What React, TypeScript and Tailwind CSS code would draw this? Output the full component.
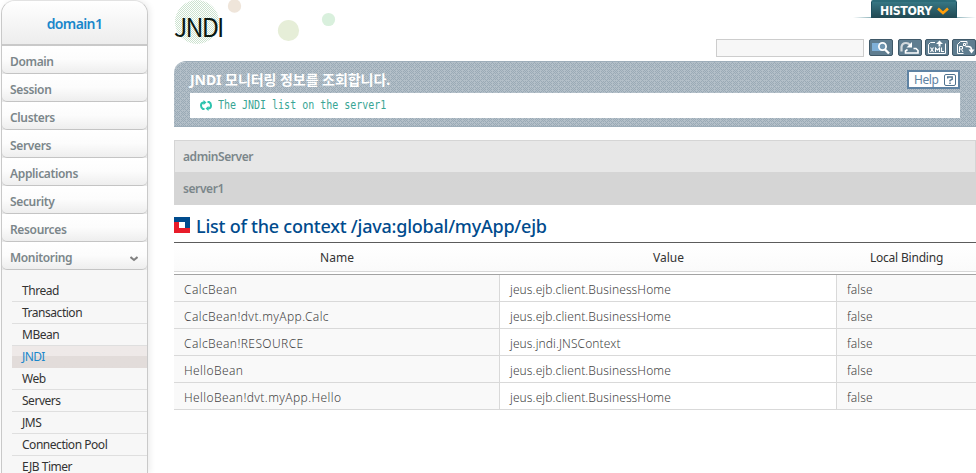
import React from "react";

const menu = ["Domain", "Session", "Clusters", "Servers", "Applications", "Security", "Resources", "Monitoring"];
const submenu = ["Thread", "Transaction", "MBean", "JNDI", "Web", "Servers", "JMS", "Connection Pool", "EJB Timer"];
const rows = [
  ["CalcBean", "jeus.ejb.client.BusinessHome", "false"],
  ["CalcBean!dvt.myApp.Calc", "jeus.ejb.client.BusinessHome", "false"],
  ["CalcBean!RESOURCE", "jeus.jndi.JNSContext", "false"],
  ["HelloBean", "jeus.ejb.client.BusinessHome", "false"],
  ["HelloBean!dvt.myApp.Hello", "jeus.ejb.client.BusinessHome", "false"],
];

function Sidebar() {
  return (
    <aside className="ml-px h-[473px] w-[147px] shrink-0 overflow-hidden rounded-t-[14px] border border-b-0 border-[#c9c9c9] border-t-[#e2e2e2] bg-[#f7f7f7] shadow-[2px_0_6px_rgba(0,0,0,0.08)]">
      <div className="flex h-[45px] items-center justify-center border-b-2 border-[#c9c9c9] bg-linear-to-b from-white to-[#ededed] pt-px text-[14px] font-semibold tracking-[-0.6px] text-[#1a87cb]">
        domain1
      </div>
      <nav className="bg-[#e9e9e9]">
        {menu.map((m) => (
          <div
            key={m}
            className="flex h-[28px] items-center justify-between rounded-b-[5px] border-b border-[#c4c4c4] bg-linear-to-b from-white via-[#fcfcfc] to-[#eeeeee] pt-[5px] pr-[9px] pl-[8px] text-[12px] leading-[18px] font-semibold tracking-[-0.35px] text-[#7b868a]"
          >
            {m}
            {m === "Monitoring" && (
              <svg width="8" height="6" viewBox="0 0 8 6" className="mt-px">
                <path d="M0.5 1 L4 4 L7.5 1" fill="none" stroke="#808080" strokeWidth="2" />
              </svg>
            )}
          </div>
        ))}
      </nav>
      <ul className="pt-[10px] pl-[10px]">
        {submenu.map((m) => (
          <li
            key={m}
            className={
              m === "JNDI"
                ? "flex h-[22px] items-center border-b border-[#e2dcda] bg-linear-to-b from-[#eee9e8] from-50% to-[#e2dcda] to-50% pt-px pl-[10px] text-[12px] leading-[16px] tracking-[-0.6px] text-[#1a87cb]"
                : "flex h-[22px] items-center border-b border-[#dfdfdf] pt-px pl-[10px] text-[12px] leading-[14px] tracking-[-0.47px] text-[#333]"
            }
          >
            {m}
          </li>
        ))}
      </ul>
    </aside>
  );
}

function TitleDots() {
  return (
    <svg width="180" height="46" className="absolute top-0 left-0">
      <defs>
        <pattern id="dots" width="2" height="2" patternUnits="userSpaceOnUse">
          <path d="M0 0h1v1H0zM1 1h1v1H1z" fill="#cbe2ce" shapeRendering="crispEdges" />
        </pattern>
      </defs>
      <circle cx="23" cy="22" r="22" fill="url(#dots)" />
      <circle cx="60.5" cy="6" r="6.7" fill="#efe5da" />
      <circle cx="114.5" cy="30.5" r="10.6" fill="#e6eed8" />
      <circle cx="154.5" cy="19.5" r="6.6" fill="#d9f0dd" />
    </svg>
  );
}

function ToolButton({ children }: { children: React.ReactNode }) {
  return (
    <button className="h-[17px] w-[24px] shrink-0 rounded-[2px] border border-[#3f5868] bg-[#5f7d90]">
      <svg width="22" height="15" viewBox="0 0 22 15" className="block">
        {children}
      </svg>
    </button>
  );
}

function Toolbar() {
  return (
    <div className="flex h-[18px] items-start">
      <input className="h-[18px] w-[148px] border border-[#cdcdcd] bg-[#f7f7f7]" />
      <div className="mr-[5px] ml-[5px] flex">
        <ToolButton>
          <rect x="2" y="3" width="12" height="8" fill="#7fb0d8" />
          <circle cx="12.5" cy="6.5" r="3.6" fill="#7196b0" stroke="#fff" strokeWidth="1.8" />
          <path d="M15 9.500l4 4" stroke="#fff" strokeWidth="2.4" />
        </ToolButton>
      </div>
      <div className="flex gap-[3px]">
        <ToolButton>
          <path d="M2.500 11.500V7Q3 3 7 3Q9.500 3 11 5" fill="none" stroke="#d3d9dd" strokeWidth="2.200" />
          <path d="M13 2v5.500H7.500z" fill="#fff" />
          <path d="M8.500 9.500L6.500 11V13H19V10.500L17 8.500H14.500" fill="none" stroke="#fff" strokeWidth="1.600" />
        </ToolButton>
        <ToolButton>
          <path d="M9 2.500H4.500L2.500 4.500V13.500H19.500V3.500" fill="none" stroke="#fff" />
          <path d="M13.500 0.500l3.500 3.500h-2.500v2.500h-2V4H10z" fill="#fff" />
          <path d="M4.500 7.500l3 4.500M7.500 7.500l-3 4.500M9.500 12V8l2 2 2-2V12M15.500 7.500v4h2.500" fill="none" stroke="#fff" strokeWidth="1.100" />
        </ToolButton>
        <ToolButton>
          <path d="M10.500 13.500H4.500V4.500L7.500 1.500H14V4.500" fill="none" stroke="#fff" />
          <path d="M6.500 12V6.500h3v2.500h-3M8.500 9.500l1.500 2.500M10.500 6V3.500h2v2h-2" fill="none" stroke="#fff" />
          <path d="M12.500 6.500h2.500q3.500 0 3.500 3.500" fill="none" stroke="#fff" strokeWidth="1.700" />
          <path d="M15.500 9.500h6l-3 4z" fill="#fff" />
        </ToolButton>
      </div>
    </div>
  );
}

function HistoryTab() {
  return (
    <div className="flex h-[18px] items-end">
      <span className="h-px w-[18px] bg-linear-to-r from-white to-[#8fb4bb]" />
      <div className="flex h-[18px] w-[86px] items-center rounded-t-[2px] border-x border-t-2 border-[#2b6b78] border-x-[#1d5060] bg-linear-to-b from-[#367683] to-[#214852] pt-[2px] pl-[8px]">
        <span className="inline-block w-[52px] origin-left scale-x-[0.92] font-['DejaVu_Sans'] text-[12px] leading-none font-bold tracking-[-0.35px] text-white">
          HISTORY
        </span>
        <svg width="12" height="8" viewBox="0 0 12 8" className="ml-[5px]">
          <path d="M1 1.500 L6 6 L11 1.500" fill="none" stroke="#ff9e0b" strokeWidth="2.600" />
        </svg>
      </div>
      <span className="h-px w-[19px] bg-linear-to-r from-[#8fb4bb] to-white" />
    </div>
  );
}

function Banner() {
  return (
    <section className="relative mt-[4px] h-[66px] overflow-hidden rounded-tl-[12px] border-t border-b border-[#9dadb9]">
      <svg width="802" height="66" className="absolute inset-0">
        <defs>
          <pattern id="weave" width="6" height="6" patternUnits="userSpaceOnUse">
            <rect width="6" height="6" fill="#b3bfc8" />
            <path
              d="M0 0h1v1H0zM1 1h1v1H1zM2 2h1v1H2zM3 3h1v1H3zM4 4h1v1H4zM5 5h1v1H5zM5 1h1v1H5zM4 2h1v1H4zM2 4h1v1H2zM1 5h1v1H1zM3 1h1v1H3zM1 3h1v1H1zM5 3h1v1H5zM3 5h1v1H3z"
              fill="#9aaab6"
              shapeRendering="crispEdges"
            />
          </pattern>
        </defs>
        <rect width="802" height="66" fill="url(#weave)" />
      </svg>
      <div className="relative flex h-[31px] items-start justify-between px-[16px]">
        <h2 className="pt-[9px] text-[14px] leading-[18px] font-bold tracking-[-0.05px] whitespace-nowrap text-white">
          JNDI 모니터링 정보를 조회합니다.
        </h2>
        <button className="mt-[8px] flex h-[19px] w-[53px] items-center border-2 border-[#5f83a3] bg-white pl-[5px] text-[12px] tracking-[-0.4px] text-[#5f83a3]">
          <span className="w-[25px] text-left">Help</span>
          <svg width="12" height="12" viewBox="0 0 12 12" className="ml-[5px] shrink-0">
            <rect x="0.500" y="0.500" width="11" height="11" rx="1.500" fill="none" stroke="#4f7390" />
            <path d="M3.700 4.500V3h4.500v2.300L6 6.500V7.500M6 8.500V10" fill="none" stroke="#4f7390" strokeWidth="1.400" />
          </svg>
        </button>
      </div>
      <div className="relative ml-[16px] flex h-[25px] w-[770px] items-center bg-white pl-[10px] text-[#38a594]">
        <svg width="12" height="11" viewBox="0 0 12 11">
          <path d="M4.500 9H3Q1 8 1 5.500Q1 2.500 4 2.500M7.500 2H9Q11 3 11 5.500Q11 8.500 8 8.500" fill="none" stroke="#2cc3ae" strokeWidth="2" />
          <path d="M3.500 0l3 2.500-3 2.500zM8.500 6l-3 2.500 3 2.500z" fill="#2cc3ae" />
        </svg>
        <span className="ml-[6px] inline-block origin-left scale-x-[0.832] pb-[2px] font-['DejaVu_Sans_Mono'] text-[12px] whitespace-nowrap">
          The JNDI list on the server1
        </span>
      </div>
    </section>
  );
}

function ContextTable() {
  return (
    <div className="border-t border-[#5c5c5c] text-[12px] text-[#444]">
      <div className="grid h-[29px] grid-cols-[326px_337px_139px] items-center border-b border-[#d8d8d8] bg-linear-to-b from-white to-[#fafafa] pt-[2px] text-center text-[#333]">
        <span>Name</span>
        <span>Value</span>
        <span className="tracking-[-0.2px]">Local Binding</span>
      </div>
      <div className="mt-[2px] border-t border-[#a3a3a3]">
        {rows.map((r) => (
          <div key={r[0]} className="grid h-[27px] grid-cols-[326px_337px_139px] grid-rows-[26px] border-b border-[#d9d9d9] leading-[23px] font-light">
            <span className="border-r border-[#d9d9d9] bg-[#f9f9f9] pt-[3px] pl-[10px] tracking-[0.4px]">{r[0]}</span>
            <span className="border-r border-[#d9d9d9] pt-[3px] pl-[10px] tracking-[0.1px]">{r[1]}</span>
            <span className="bg-[#f9f9f9] pt-[3px] pl-[10px] tracking-[0.1px]">{r[2]}</span>
          </div>
        ))}
      </div>
    </div>
  );
}

export default function App() {
  return (
    <div className="flex h-[473px] w-[976px] overflow-hidden bg-white font-['Noto_Sans','Noto_Sans_CJK_KR',sans-serif]">
      <Sidebar />
      <main className="ml-[26px] w-[802px] shrink-0">
        <header className="relative flex h-[57px] justify-between">
          <TitleDots />
          <h1 className="relative pt-[9px] font-['Noto_Sans_CJK_KR',sans-serif] text-[25px] leading-[34px] tracking-[-1.9px] text-[#0b1a14]">JNDI</h1>
          <div className="flex flex-col items-end justify-between">
            <HistoryTab />
            <Toolbar />
          </div>
        </header>
        <Banner />
        <div className="mt-[13px] border border-b-0 border-[#d5d5d5] text-[12px] font-semibold tracking-[-0.42px] text-[#7b868a]">
          <div className="h-[31px] bg-[#e7e7e7] pl-[8px] leading-[32px]">adminServer</div>
          <div className="h-[33px] bg-[#d5d5d5] pl-[8px] leading-[33px]">server1</div>
        </div>
        <div className="flex h-[37px] items-center pt-[3px]">
          <svg width="16" height="16" viewBox="0 0 16 16" shapeRendering="crispEdges">
            <path d="M0 0h16v11H11V5H5v6H0z" fill="#004b8d" />
            <path d="M0 5h5v6h6v0h5v5H0z" fill="#e81c2a" />
            <path d="M11 5h5v6h-5z" fill="#004b8d" />
            <path d="M5 5h6v6H5z" fill="#fff" />
          </svg>
          <h2 className="ml-[6px] pt-px text-[18px] leading-[26px] font-medium tracking-[-0.23px] whitespace-nowrap text-[#004b8d]">
            List of the context /java:global/myApp/ejb
          </h2>
        </div>
        <ContextTable />
      </main>
    </div>
  );
}
